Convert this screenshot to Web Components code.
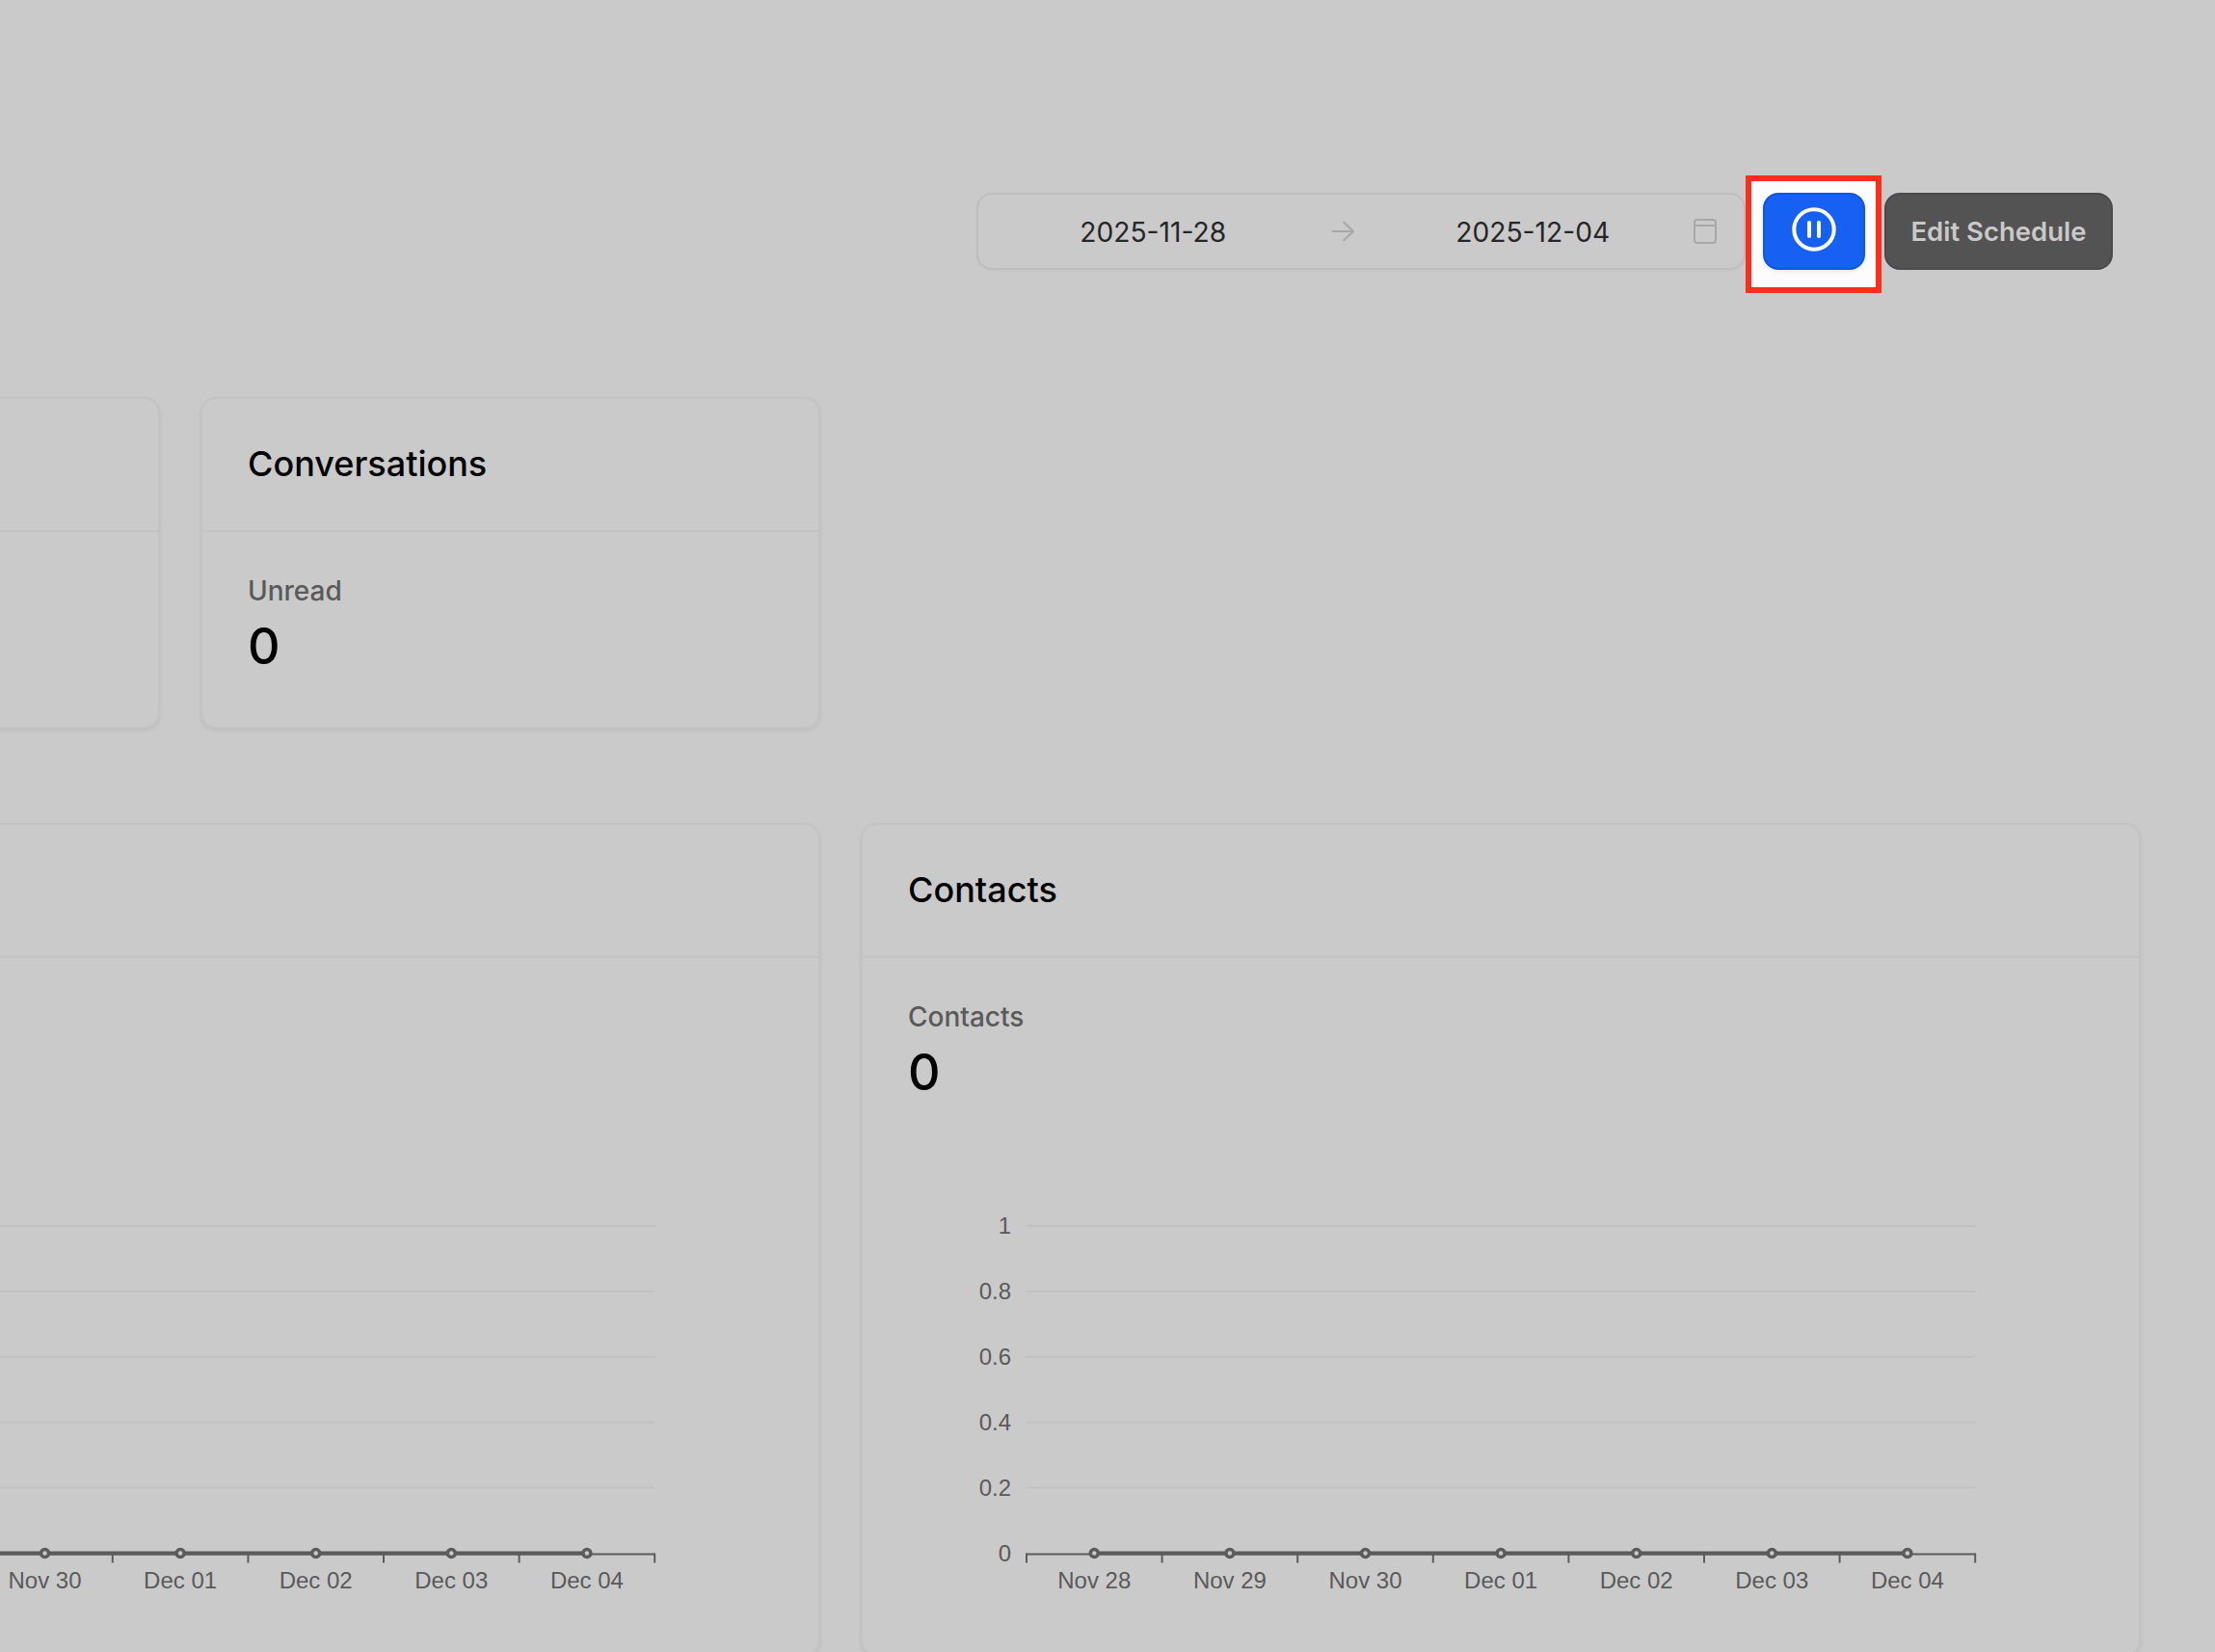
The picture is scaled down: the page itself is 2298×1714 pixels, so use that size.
<!DOCTYPE html>
<html lang="en">
<head>
<meta charset="utf-8">
<title>Schedule report</title>
<style>
  html, body { margin: 0; height: 100%; overflow: hidden; background: #cacaca; }
  body { font-family: Inter, "Liberation Sans", sans-serif; }
</style>
</head>
<body>
<report-page>
  <report-toolbar slot="toolbar"></report-toolbar>
  <dash-card></dash-card>
  <dash-card heading="Conversations">
    <dash-stat label="Unread" value="0"></dash-stat>
  </dash-card>
  <dash-card style="grid-column: 1 / span 2">
    <div style="height:202px"></div>
    <line-chart visible-from="2" hide-values></line-chart>
  </dash-card>
  <dash-card heading="Contacts" style="grid-column: span 2">
    <dash-stat label="Contacts" value="0"></dash-stat>
    <line-chart></line-chart>
  </dash-card>
</report-page>

<script>
class ReportPage extends HTMLElement {
  constructor() {
    super();
    this.attachShadow({ mode: 'open' });
    this.shadowRoot.innerHTML = `
      <style>
        :host { display:block; height:1714px; overflow:hidden; }
        .grid {
          display:grid; grid-template-columns:repeat(4, 1fr); column-gap:42px; row-gap:98px;
          width:2698px; margin:132px 0 0 -477px;
        }
      </style>
      <slot name="toolbar"></slot>
      <div class="grid"><slot></slot></div>
    `;
  }
}

class ReportToolbar extends HTMLElement {
  constructor() {
    super();
    this.attachShadow({ mode: 'open' });
    this.shadowRoot.innerHTML = `
      <style>
        :host { display:flex; justify-content:flex-end; align-items:center; padding:200px 106px 0 0; }
        .picker {
          box-sizing:border-box; width:798px; height:80px; display:flex; align-items:center;
          border:2px solid #bdbdbd; border-radius:16px; padding-right:28px;
          font-size:28.200px; color:#262626; box-shadow:0 1px 2px rgba(0,0,0,.03);
        }
        .date { width:363px; margin-right:2px; text-align:center; padding-top:1px; }
        .date.end { width:350px; margin-right:0; box-sizing:border-box; padding-left:16px; }
        .arrow { width:24px; height:24px; margin:0 2px; flex:none; }
        .cal { width:24px; height:26px; flex:none; }
        .spot { position:relative; margin:0 20px 0 18px; }
        .spot::before {
          content:''; position:absolute; left:-18px; top:-18px; width:129px; height:110px;
          background:#fcfcfc; border:6px solid #ff2d1c;
        }
        .pause {
          position:relative; display:flex; align-items:center; justify-content:center;
          box-sizing:border-box; width:106px; height:80px; padding:0 0 4px;
          background:#1660f2; border:2px solid #0f55e8; border-radius:16px;
          box-shadow:0 2px 4px rgba(0,0,0,.08);
        }
        .edit {
          box-sizing:border-box; width:237px; height:80px; padding:0;
          background:#535353; border:2px solid #4a4a4a; border-radius:16px;
          font:600 27.500px Inter, "Liberation Sans", sans-serif; color:#c9c9c9;
        }
      </style>
      <div class="picker">
        <span class="date">2025-11-28</span>
        <svg class="arrow" viewBox="0 0 24 24" fill="none" stroke="#a8a8a8" stroke-width="2">
          <path d="M1 12h22M12.500 2l10.500 10-10.500 10"/>
        </svg>
        <span class="date end">2025-12-04</span>
        <svg class="cal" viewBox="0 0 24 26" fill="none" stroke="#a8a8a8" stroke-width="2">
          <rect x="1" y="1" width="22" height="24" rx="3"/>
          <path d="M1 7h22"/>
        </svg>
      </div>
      <div class="spot">
        <button class="pause" aria-label="Pause">
          <svg width="46" height="46" viewBox="0 0 46 46" fill="none" stroke="#fff" stroke-width="4">
            <circle cx="23" cy="23" r="20.700"/>
            <path d="M18 16v14M28 16v14" stroke-linecap="round"/>
          </svg>
        </button>
      </div>
      <button class="edit">Edit Schedule</button>
    `;
  }
}

class DashCard extends HTMLElement {
  constructor() {
    super();
    this.attachShadow({ mode: 'open' });
    this.shadowRoot.innerHTML = `
      <style>
        :host {
          display:block; box-sizing:border-box; border:2px solid #c3c3c3; border-radius:16px;
          box-shadow:0 2px 4px rgba(0,0,0,.07); overflow:hidden;
        }
        .head {
          box-sizing:border-box; height:138px; padding:0 47px 3px; display:flex; align-items:center;
          border-bottom:2px solid #c3c3c3; font-size:36px; font-weight:500; color:#000;
        }
      </style>
      <div class="head" id="head"></div>
      <slot></slot>
    `;
  }

  connectedCallback() {
    this.shadowRoot.getElementById('head').textContent = this.getAttribute('heading') || '';
  }
}

class DashStat extends HTMLElement {
  constructor() {
    super();
    this.attachShadow({ mode: 'open' });
    this.shadowRoot.innerHTML = `
      <style>
        :host { display:block; box-sizing:border-box; height:202px; padding:41px 47px 0; }
        .label { font-size:28px; font-weight:500; line-height:40px; color:#5a5a5a; }
        .value { font-size:52px; font-weight:500; line-height:64px; margin-top:6px; color:#000; }
      </style>
      <div class="label" id="label"></div>
      <div class="value" id="value"></div>
    `;
  }

  connectedCallback() {
    this.shadowRoot.getElementById('label').textContent = this.getAttribute('label');
    this.shadowRoot.getElementById('value').textContent = this.getAttribute('value');
  }
}

class LineChart extends HTMLElement {
  constructor() {
    super();
    this.attachShadow({ mode: 'open' });
  }

  connectedCallback() {
    const days = ['Nov 28', 'Nov 29', 'Nov 30', 'Dec 01', 'Dec 02', 'Dec 03', 'Dec 04'];
    const visibleFrom = Number(this.getAttribute('visible-from')) || 0;
    const hideValues = this.hasAttribute('hide-values');
    const left = 170, step = 140.6, top = 76, rowH = 67.9;
    const right = left + step * 7;
    const base = top + rowH * 5;
    let svg = '';
    ['1', '0.8', '0.6', '0.4', '0.2', '0'].forEach((t, i) => {
      const y = top + rowH * i;
      if (i < 5) svg += `<line x1="${left}" x2="${right}" y1="${y}" y2="${y}" stroke="#c1c1c1" stroke-width="2"/>`;
      if (!hideValues) svg += `<text x="${left - 16}" y="${y + 8}" text-anchor="end">${t}</text>`;
    });
    svg += `<line x1="${left}" x2="${right}" y1="${base + 1}" y2="${base + 1}" stroke="#5b5b5b" stroke-width="2"/>`;
    for (let i = 0; i <= 7; i++) {
      const x = left + step * i;
      svg += `<line x1="${x}" x2="${x}" y1="${base}" y2="${base + 10}" stroke="#5b5b5b" stroke-width="2"/>`;
    }
    const first = left + step / 2;
    svg += `<line x1="${first}" x2="${first + step * 6}" y1="${base}" y2="${base}" stroke="#5b5b5b" stroke-width="4"/>`;
    days.forEach((d, i) => {
      const x = first + step * i;
      svg += `<circle cx="${x}" cy="${base}" r="4" fill="#cacaca" stroke="#5b5b5b" stroke-width="3.500"/>`;
      if (i >= visibleFrom) svg += `<text x="${x}" y="${base + 36}" text-anchor="middle">${d}</text>`;
    });
    this.shadowRoot.innerHTML = `
      <style>
        :host { display:block; }
        svg { display:block; }
        text { font:24px "Liberation Sans", Arial, sans-serif; fill:#5a5a5a; }
      </style>
      <svg width="1324" height="520">${svg}</svg>
    `;
  }
}

customElements.define('report-page', ReportPage);
customElements.define('report-toolbar', ReportToolbar);
customElements.define('dash-card', DashCard);
customElements.define('dash-stat', DashStat);
customElements.define('line-chart', LineChart);
</script>
</body>
</html>
